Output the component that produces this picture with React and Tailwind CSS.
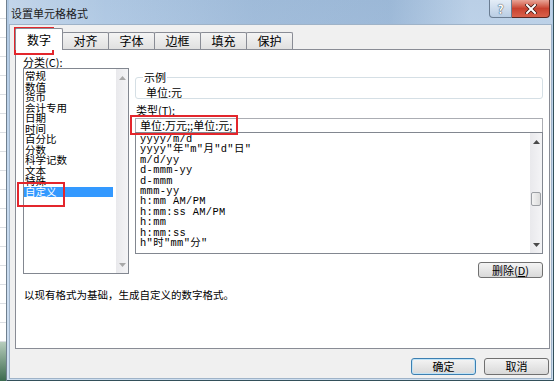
import React from 'react';

const categories = ['常规', '数值', '货币', '会计专用', '日期', '时间', '百分比', '分数', '科学记数', '文本', '特殊', '自定义'];
const formats = [
  'yyyy/m/d',
  'yyyy"年"m"月"d"日"',
  'm/d/yy',
  'd-mmm-yy',
  'd-mmm',
  'mmm-yy',
  'h:mm AM/PM',
  'h:mm:ss AM/PM',
  'h:mm',
  'h:mm:ss',
  'h"时"mm"分"',
];
const tabs = ['对齐', '字体', '边框', '填充', '保护'];

const Arrow = ({ down, muted }) => (
  <svg width="7" height="4" viewBox="0 0 7 4" className={down ? 'rotate-180' : ''}>
    <path d="M3.5 0 L7 4 L0 4 Z" fill={muted ? '#a8a8a8' : '#4a4a4a'} />
  </svg>
);

const ScrollBar = ({ thumb, muted }) => (
  <div className="w-[12px] flex flex-col bg-gradient-to-r from-[#e9e9ec] to-[#f4f4f6]">
    <div className="h-[17px] flex items-center justify-center">
      <Arrow muted={muted} />
    </div>
    <div className="flex-1 flex flex-col">
      {thumb && (
        <div className="mt-[42px] mx-[1px] h-[14px] rounded-[2px] border border-[#9b9ea3] bg-gradient-to-r from-[#f3f3f3] to-[#dcdcdc]" />
      )}
    </div>
    <div className="h-[17px] flex items-center justify-center">
      <Arrow down muted={muted} />
    </div>
  </div>
);

const Button = ({ children, primary }) => (
  <div
    className={`w-[65px] h-[17px] rounded-[3px] border flex items-center justify-center text-[11px] leading-[11px] bg-gradient-to-b from-[#f4f4f4] to-[#d9d9d9] ${
      primary ? 'border-[#3c7fb1] shadow-[inset_0_0_0_1px_#bfe3f7]' : 'border-[#707070]'
    }`}
  >
    {children}
  </div>
);

export default function App() {
  return (
    <div className="relative w-[554px] h-[381px] overflow-hidden flex bg-white text-[11px] text-black font-['Noto_Sans_CJK_SC',sans-serif]">
      {/* worksheet behind the dialog */}
      <div className="w-[7px] flex flex-col bg-white border-r border-[#70808f]">
        {Array.from({ length: 18 }).map((_, i) => (
          <div key={i} className="h-[19px] shrink-0 border-b border-[#dcdfe3]" />
        ))}
        <div className="flex-1 bg-gradient-to-b from-[#b7cdbd] to-[#3b6b50]" />
      </div>

      {/* dialog window */}
      <div className="flex-1 flex flex-col pl-[2px] pr-[1px] pb-[1px] border-r border-b border-[#33505a] bg-[linear-gradient(180deg,#aec7e2_0%,#c4d8ee_45%,#cddef0_100%)]">
        {/* title bar */}
        <div className="h-[24px] flex items-start justify-between bg-[linear-gradient(90deg,rgba(255,255,255,0.25)_0%,rgba(255,255,255,0)_18%,rgba(90,130,175,0.18)_45%,rgba(90,130,175,0.22)_70%,rgba(255,255,255,0.15)_85%)]">
          <div className="pl-[2px] pt-[7px] text-[11px] leading-[12px] text-[#1b1b1b]">设置单元格格式</div>
          <div className="flex mr-[2px]">
            <div className="w-[23px] h-[18px] rounded-bl-[4px] border border-t-0 border-[#6a7d92] bg-gradient-to-b from-[#e4edf7] to-[#b9cde3] flex items-center justify-center text-[12px] font-bold leading-none text-white [text-shadow:0_0_1px_#2c3e50,0_0_1px_#2c3e50]">
              ?
            </div>
            <div className="w-[38px] h-[18px] rounded-br-[4px] border border-t-0 border-l-0 border-[#5a2620] bg-gradient-to-b from-[#e8a497] via-[#c8412f] to-[#d9614b] flex items-center justify-center">
              <svg width="12" height="10" viewBox="0 0 12 10">
                <path d="M2 1 L10 9 M10 1 L2 9" stroke="#3a1410" strokeWidth="3.4" strokeLinecap="square" />
                <path d="M2 1 L10 9 M10 1 L2 9" stroke="#ffffff" strokeWidth="2" strokeLinecap="square" />
              </svg>
            </div>
          </div>
        </div>

        {/* client area */}
        <div className="flex-1 flex flex-col bg-[#f0f0f0] border border-[#9fb3c8] pl-[5px] pr-[1px] pt-[3px] pb-[3px]">
          {/* tabs */}
          <div className="flex items-end h-[21px]">
            <div className="relative z-10 h-[22px] w-[48px] -mb-[1px] bg-white border border-b-0 border-[#898c95] rounded-t-[2px] flex items-center justify-center text-[12px] leading-[12px]">
              数字
            </div>
            {tabs.map((t) => (
              <div
                key={t}
                className="h-[17px] w-[47px] -ml-px border border-b-0 border-[#898c95] rounded-t-[2px] bg-gradient-to-b from-[#f4f4f4] to-[#e0e0e0] flex items-center justify-center text-[12px] leading-[12px]"
              >
                {t}
              </div>
            ))}
          </div>

          {/* tab page */}
          <div className="h-[300px] bg-white border border-[#898c95] flex flex-col pl-[7px] pr-[6px] pt-[6px]">
            <div className="flex items-start">
              {/* category list */}
              <div className="w-[106px] flex flex-col">
                <div className="h-[12px] leading-[12px]">
                  分类(<span className="underline">C</span>):
                </div>
                <div className="h-[206px] border border-[#828790] flex">
                  <div className="flex-1 pt-[2px] pr-[3px] text-[10.5px]">
                    {categories.map((c) => (
                      <div
                        key={c}
                        className={
                          c === '自定义'
                            ? 'h-[10.5px] leading-[10.5px] pl-[1px] bg-[#3399ff] text-white'
                            : 'h-[10.5px] leading-[10.5px] pl-[1px]'
                        }
                      >
                        {c}
                      </div>
                    ))}
                  </div>
                  <ScrollBar muted />
                </div>
              </div>

              {/* right side */}
              <div className="ml-[6px] w-[408px] mt-[15px] flex flex-col">
                <fieldset className="border border-[#d5dfe5] rounded-[3px] px-[7px]">
                  <legend className="px-[1px] leading-[12px]">示例</legend>
                  <div className="pt-[4px] pl-[3px] leading-[11px]">单位:元</div>
                </fieldset>

                <div className="mt-[5px] ml-[1px] leading-[12px]">
                  类型(<span className="underline">T</span>):
                </div>
                <div className="mt-[2px] h-[14px] border border-b-0 border-[#abadb3] pl-[4px] leading-[13px]">
                  单位:万元;;单位:元;
                </div>
                <div className="h-[122px] border border-[#828790] flex">
                  <div className="flex-1 pt-[1px] pl-[4px] font-['Liberation_Mono','Noto_Sans_CJK_SC',monospace] text-[10.4px] tracking-[0.35px]">
                    {formats.map((f) => (
                      <div key={f} className="h-[10.4px] leading-[10.4px] whitespace-pre">
                        {f}
                      </div>
                    ))}
                  </div>
                  <ScrollBar thumb />
                </div>

                <div className="mt-[8px] self-end">
                  <div className="w-[65px] h-[16px] rounded-[3px] border border-[#707070] bg-gradient-to-b from-[#f4f4f4] to-[#d9d9d9] flex items-center justify-center text-[11px] leading-[11px]">
                    删除(<span className="underline">D</span>)
                  </div>
                </div>
              </div>
            </div>

            <div className="mt-[11px] ml-[1px] text-[10.5px] leading-[12px]">以现有格式为基础，生成自定义的数字格式。</div>
          </div>

          {/* dialog buttons */}
          <div className="mt-[9px] flex justify-end gap-[8px] pr-[1px]">
            <Button primary>确定</Button>
            <Button>取消</Button>
          </div>
        </div>
      </div>

      {/* red annotation boxes */}
      <div className="absolute left-[14px] top-[27px] w-[40px] h-[28px] border-2 border-[#e3262c]" />
      <div className="absolute left-[17px] top-[182px] w-[48px] h-[25px] border-2 border-[#e3262c]" />
      <div className="absolute left-[130px] top-[115px] w-[108px] h-[20px] border-2 border-[#e3262c]" />
    </div>
  );
}
